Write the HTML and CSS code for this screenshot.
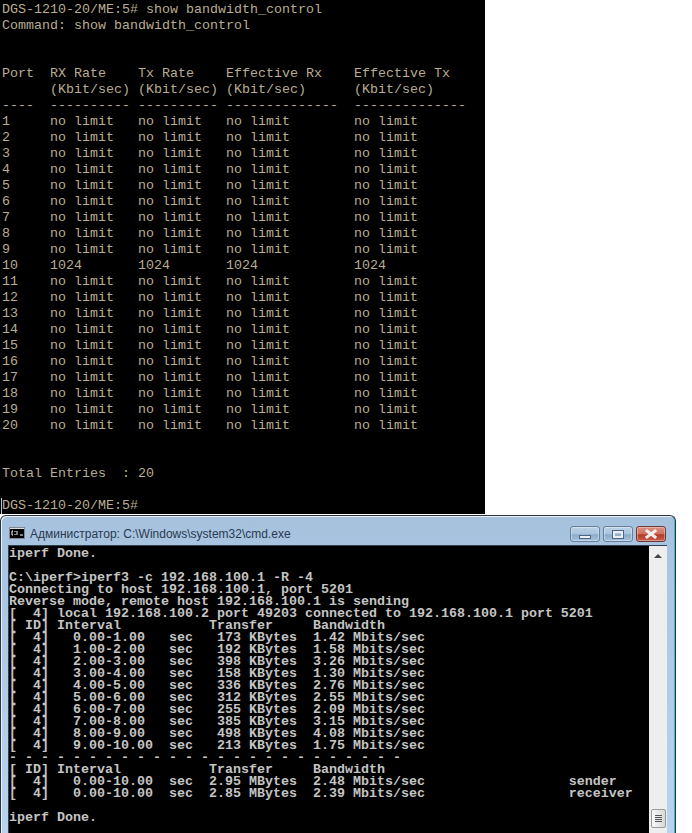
FILE: index.html
```html
<!DOCTYPE html>
<html lang="en">
<head>
<meta charset="utf-8">
<title>bandwidth control and iperf</title>
<link rel="stylesheet" href="styles.css">
</head>
<body>
<section class="switch">
<pre class="switch-text">DGS-1210-20/ME:5# show bandwidth_control
Command: show bandwidth_control


Port  RX Rate    Tx Rate    Effective Rx    Effective Tx
      (Kbit/sec) (Kbit/sec) (Kbit/sec)      (Kbit/sec)
----  ---------- ---------- --------------  --------------
1     no limit   no limit   no limit        no limit
2     no limit   no limit   no limit        no limit
3     no limit   no limit   no limit        no limit
4     no limit   no limit   no limit        no limit
5     no limit   no limit   no limit        no limit
6     no limit   no limit   no limit        no limit
7     no limit   no limit   no limit        no limit
8     no limit   no limit   no limit        no limit
9     no limit   no limit   no limit        no limit
10    1024       1024       1024            1024
11    no limit   no limit   no limit        no limit
12    no limit   no limit   no limit        no limit
13    no limit   no limit   no limit        no limit
14    no limit   no limit   no limit        no limit
15    no limit   no limit   no limit        no limit
16    no limit   no limit   no limit        no limit
17    no limit   no limit   no limit        no limit
18    no limit   no limit   no limit        no limit
19    no limit   no limit   no limit        no limit
20    no limit   no limit   no limit        no limit


Total Entries  : 20

<span class="prompt">DGS-1210-20/ME:5#</span></pre>
</section>
<section class="window">
<header class="titlebar">
<svg class="app-icon" width="16" height="12" viewBox="0 0 16 12" aria-hidden="true">
<rect x="0.5" y="0.5" width="15" height="11" fill="#d8dde2" stroke="#7f8a96"/>
<rect x="1" y="2" width="14" height="9" fill="#000"/>
<path d="M4 4H3v4h1M6 4v1M6 7v1M8 4v4M11 8h3" stroke="#fff" fill="none"/>
</svg>
<span class="title">Администратор: C:\Windows\system32\cmd.exe</span>
<div class="controls">
<span class="ctl ctl-min"><i class="min-glyph"></i></span>
<span class="ctl ctl-max"><i class="max-glyph"></i></span>
<span class="ctl ctl-close"><svg width="16" height="12" viewBox="0 0 16 12" aria-hidden="true"><path d="M4 3l8 6M12 3L4 9" stroke="#f4eeee" stroke-width="3" stroke-linecap="square"/></svg></span>
</div>
</header>
<div class="client">
<pre class="console">iperf Done.

C:\iperf&gt;iperf3 -c 192.168.100.1 -R -4
Connecting to host 192.168.100.1, port 5201
Reverse mode, remote host 192.168.100.1 is sending
[  4] local 192.168.100.2 port 49203 connected to 192.168.100.1 port 5201
[ ID] Interval           Transfer     Bandwidth
[  4]   0.00-1.00   sec   173 KBytes  1.42 Mbits/sec
[  4]   1.00-2.00   sec   192 KBytes  1.58 Mbits/sec
[  4]   2.00-3.00   sec   398 KBytes  3.26 Mbits/sec
[  4]   3.00-4.00   sec   158 KBytes  1.30 Mbits/sec
[  4]   4.00-5.00   sec   336 KBytes  2.76 Mbits/sec
[  4]   5.00-6.00   sec   312 KBytes  2.55 Mbits/sec
[  4]   6.00-7.00   sec   255 KBytes  2.09 Mbits/sec
[  4]   7.00-8.00   sec   385 KBytes  3.15 Mbits/sec
[  4]   8.00-9.00   sec   498 KBytes  4.08 Mbits/sec
[  4]   9.00-10.00  sec   213 KBytes  1.75 Mbits/sec
- - - - - - - - - - - - - - - - - - - - - - - - -
[ ID] Interval           Transfer     Bandwidth
[  4]   0.00-10.00  sec  2.95 MBytes  2.48 Mbits/sec                  sender
[  4]   0.00-10.00  sec  2.85 MBytes  2.39 Mbits/sec                  receiver

iperf Done.</pre>
<div class="scrollbar">
<span class="arrow"></span>
<span class="thumb"><i></i><i></i><i></i><i></i></span>
</div>
</div>
</section>
</body>
</html>
```

FILE: styles.css
```css
html, body {
  margin: 0;
  padding: 0;
  background: #fff;
  height: 833px;
  overflow: hidden;
}

pre {
  margin: 0;
  font-family: "Liberation Mono", "Courier New", monospace;
  font-size: 13.33px;
}

.switch {
  width: 485px;
  height: 514px;
  background: #000;
  box-sizing: border-box;
  padding: 2px 0 0 2px;
}

.switch-text {
  color: #b9ad93;
  line-height: 16px;
}

.prompt {
  display: inline-block;
  margin-left: -1px;
  padding-left: 0;
  border-left: 1px solid #b8c4d0;
}

.window {
  width: 676px;
  height: 318px;
  margin-top: 1px;
  box-sizing: border-box;
  background: linear-gradient(#a6c1dc, #a9c5e2 40px, #b8d3ee);
  border: 1px solid #2b3640;
  border-bottom: 0;
  border-radius: 6px 6px 0 0;
  box-shadow: inset 1px 1px 0 #e8f0f8, inset -1px 0 0 #3fb5d8;
  padding: 0 8px 0 7px;
  display: flex;
  flex-direction: column;
}

.titlebar {
  height: 29px;
  flex: none;
  display: flex;
  align-items: flex-start;
}

.app-icon {
  margin: 11px 5px 0 1px;
  flex: none;
}

.title {
  margin-top: 10px;
  font-family: "Liberation Sans", Arial, sans-serif;
  font-size: 12px;
  line-height: 16px;
  color: #2a3a50;
  flex: 1;
}

.controls {
  display: flex;
  gap: 3px;
  margin: 10px 1px 0 0;
}

.ctl {
  height: 14px;
  width: 28px;
  border: 1px solid #66809a;
  border-radius: 3px;
  display: flex;
  align-items: center;
  justify-content: center;
  background: linear-gradient(#bcd1e5 0, #a9c4de 50%, #8aabca 55%, #a4c2de 100%);
  box-shadow: inset 0 0 0 1px rgba(255, 255, 255, .35);
}

.ctl-close {
  border-color: #6e3a34;
  background: linear-gradient(#dc8f84 0, #cf6f60 50%, #b23a28 55%, #c9604f 100%);
}

.min-glyph {
  display: block;
  width: 10px;
  height: 2px;
  margin-top: 5px;
  background: #e8eef4;
  border: 1px solid #4c6580;
}

.max-glyph {
  display: block;
  width: 6px;
  height: 3px;
  background: transparent;
  border: 2px solid #e8eef4;
  outline: 1px solid #4c6580;
}

.client {
  flex: 1;
  min-height: 0;
  display: flex;
  border-top: 1px solid #33404e;
  border-left: 1px solid #33404e;
  background: #000;
}

.console {
  flex: 1;
  min-width: 0;
  background: #000;
  color: #c4c4c4;
  font-weight: bold;
  line-height: 12px;
  padding: 2px 0 0 0;
  overflow: hidden;
}

.scrollbar {
  width: 18px;
  flex: none;
  background: #eeeeee;
  display: flex;
  flex-direction: column;
  align-items: center;
  justify-content: space-between;
  box-sizing: border-box;
  padding: 8px 0 5px;
}

.arrow {
  width: 0;
  height: 0;
  border-left: 4px solid transparent;
  border-right: 4px solid transparent;
  border-bottom: 4px solid #444;
}

.thumb {
  width: 15px;
  height: 19px;
  box-sizing: border-box;
  border: 1px solid #9a9a9a;
  border-radius: 2px;
  background: linear-gradient(90deg, #f8f8f8, #d8d8d8);
  display: flex;
  flex-direction: column;
  align-items: center;
  justify-content: center;
  gap: 1px;
}

.thumb i {
  display: block;
  width: 7px;
  height: 1px;
  background: #555;
}
```
